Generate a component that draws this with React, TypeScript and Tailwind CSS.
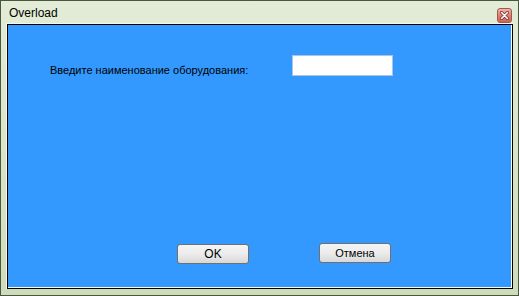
import React from "react";

export default function App() {
  const font = { fontFamily: '"Liberation Sans", Arial, sans-serif' };
  return (
    <div
      className="w-[519px] h-[296px] border border-[#4a5640] bg-gradient-to-b from-[#e3ecd6] to-[#cfdcba] flex flex-col"
      style={font}
    >
      <div className="h-[22px] relative flex items-center pl-[8px] pt-[1px]">
        <span className="text-[12px] text-black">Overload</span>
        <div className="absolute right-[6px] top-[7px] w-[15px] h-[15px] rounded-[3px] border border-[#a0584c] bg-gradient-to-b from-[#f0b4aa] via-[#e07c70] to-[#d2645a] flex items-center justify-center">
          <svg width="9" height="9" viewBox="0 0 9 9">
            <path d="M1.5 1.5 L7.5 7.5 M7.5 1.5 L1.5 7.5" stroke="#6a2a22" strokeWidth="3" strokeLinecap="round" />
            <path d="M1.5 1.5 L7.5 7.5 M7.5 1.5 L1.5 7.5" stroke="#ffffff" strokeWidth="1.6" strokeLinecap="round" />
          </svg>
        </div>
      </div>
      <div className="flex-1 mx-[5px] mb-[6px] border-l border-t border-[#f5f8ef] flex">
        <div className="flex-1 border border-black flex">
          <div className="flex-1 bg-[#3399ff] border-r border-b border-white flex flex-col">
            <div className="flex items-start mt-[30px] pl-[42px]">
              <span className="w-[242px] text-[11px] leading-[16px] text-black mt-[7px]">
                Введите наименование оборудования:
              </span>
              <div className="w-[101px] h-[21px] bg-white border border-[#a9c6e6]" />
            </div>
            <div className="flex items-start mt-[166px] pl-[169px]">
              <button className="w-[72px] h-[20px] rounded-[3px] border border-[#707070] bg-gradient-to-b from-[#f4f4f4] via-[#ececec] to-[#d8d8d8] text-[12px] text-black flex items-center justify-center">
                OK
              </button>
              <button className="ml-[70px] -mt-[1px] w-[72px] h-[20px] rounded-[3px] border border-[#707070] bg-gradient-to-b from-[#f4f4f4] via-[#ececec] to-[#d8d8d8] text-[11px] text-black flex items-center justify-center">
                Отмена
              </button>
            </div>
          </div>
        </div>
      </div>
    </div>
  );
}
